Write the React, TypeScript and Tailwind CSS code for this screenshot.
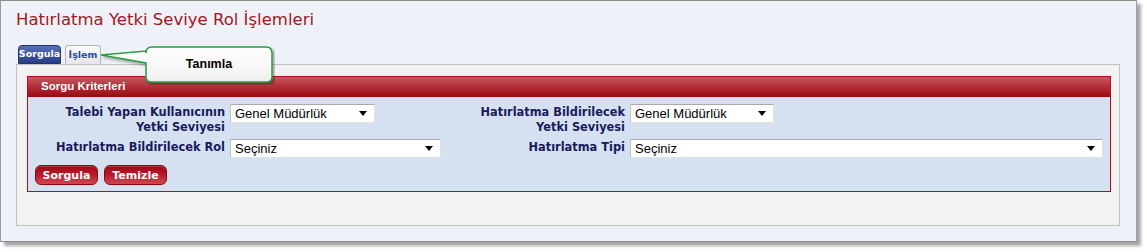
import React from "react";

function FakeSelect({ value, width }: { value: string; width: string }) {
  return (
    <div
      className={`${width} h-[19px] bg-white border border-t-[#a9a9a9] border-l-[#c4c4c4] border-r-[#e2e2e2] border-b-[#e2e2e2] flex items-center justify-between pl-[4px] pr-[7px]`}
    >
      <span className="text-[13px] text-black leading-none font-['Liberation_Sans',Arial,sans-serif]">
        {value}
      </span>
      <svg width="8" height="5" viewBox="0 0 8 5">
        <path d="M0 0 H8 L4 5 Z" fill="#000" />
      </svg>
    </div>
  );
}

function Label({ children }: { children: React.ReactNode }) {
  return (
    <div className="text-right text-[11.4px] font-bold leading-[14.5px] text-[#1a1a5c] pt-[1px] font-['DejaVu_Sans',Verdana,sans-serif]">
      {children}
    </div>
  );
}

function RedButton({ children }: { children: React.ReactNode }) {
  return (
    <button className="h-[20px] w-[63px] rounded-[6px] border border-[#8a0612] bg-gradient-to-b from-[#9c0816] via-[#b81a2a] to-[#d44452] text-white text-[11px] font-bold leading-none font-['DejaVu_Sans',Verdana,sans-serif] shadow-[inset_0_1px_0_rgba(255,255,255,0.2)]">
      {children}
    </button>
  );
}

export default function App() {
  return (
    <div className="w-[1147px] h-[252px] bg-white">
      <div className="relative w-[1137px] h-[242px] bg-[#eef2f8] border border-t-[#8c8c8c] border-l-[#9a9a9a] border-r-[#8fa3bf] border-b-[#8c8c8c] shadow-[4px_4px_3px_rgba(0,0,0,0.35)] pl-[15px] pr-[16px]">
        {/* Title */}
        <h1 className="pt-[7px] h-[44px] text-[16.5px] text-[#a01822] font-['DejaVu_Sans',Verdana,sans-serif]">
          Hatırlatma Yetki Seviye Rol İşlemleri
        </h1>

        {/* Tabs */}
        <div className="flex items-end gap-[4px] pl-[2px] h-[19px]">
          <div className="h-[19px] w-[43px] rounded-t-[4px] bg-gradient-to-b from-[#5570b8] to-[#2a3d86] border border-[#24346e] flex items-center justify-center text-white text-[9.5px] font-bold font-['DejaVu_Sans',Verdana,sans-serif]">
            Sorgula
          </div>
          <div className="h-[19px] w-[36px] rounded-t-[4px] bg-gradient-to-b from-[#fbfbfb] to-[#e6e6e6] border border-[#b4b4b4] border-b-0 flex items-center justify-center text-[#2a4a9c] text-[9.5px] font-bold font-['DejaVu_Sans',Verdana,sans-serif]">
            İşlem
          </div>
        </div>

        {/* Tab content */}
        <div className="h-[162px] bg-[#f2f2f2] border border-[#c0c0c0] pt-[11px] pl-[10px] pr-[8px]">
          <div className="border border-[#b0101e]">
            <div className="h-[20px] bg-gradient-to-b from-[#c85760] via-[#b22c37] to-[#9a0410] flex items-center pl-[13px] text-white text-[11.5px] font-bold font-['Liberation_Sans',Arial,sans-serif]">
              Sorgu Kriterleri
            </div>
            <div className="bg-[#d5e1f1] pt-[7px] pb-[6px] pl-[7px] pr-[8px]">
              <div className="grid grid-cols-[190px_230px_160px_1fr] gap-x-[5px] gap-y-[5px]">
                <Label>
                  Talebi Yapan Kullanıcının
                  <br />
                  Yetki Seviyesi
                </Label>
                <div>
                  <FakeSelect value="Genel Müdürlük" width="w-[145px]" />
                </div>
                <Label>
                  Hatırlatma Bildirilecek
                  <br />
                  Yetki Seviyesi
                </Label>
                <div>
                  <FakeSelect value="Genel Müdürlük" width="w-[144px]" />
                </div>
                <Label>Hatırlatma Bildirilecek Rol</Label>
                <div>
                  <FakeSelect value="Seçiniz" width="w-[211px]" />
                </div>
                <Label>Hatırlatma Tipi</Label>
                <div>
                  <FakeSelect value="Seçiniz" width="w-[473px]" />
                </div>
              </div>
              <div className="flex gap-[6px] mt-[7px]">
                <RedButton>Sorgula</RedButton>
                <RedButton>Temizle</RedButton>
              </div>
            </div>
          </div>
        </div>

        {/* Tooltip */}
        <div className="absolute left-[98px] top-[44px] w-[176px] h-[40px]">
          <svg width="176" height="40" viewBox="0 0 176 40" className="absolute left-0 top-0">
            <defs>
              <linearGradient id="tipg" x1="0" y1="0" x2="0" y2="1">
                <stop offset="0" stopColor="#ffffff" />
                <stop offset="1" stopColor="#eef0ee" />
              </linearGradient>
              <filter id="tips" x="-10%" y="-20%" width="130%" height="160%">
                <feDropShadow dx="2" dy="2" stdDeviation="1.5" floodColor="#000" floodOpacity="0.35" />
              </filter>
            </defs>
            <path
              d="M53 2 H167 Q173 2 173 8 V32 Q173 37 167 37 H53 Q47 37 47 32 V18 L2 10 L47 6 V8 Q47 2 53 2 Z"
              fill="url(#tipg)"
              stroke="#2e9a44"
              strokeWidth="1.5"
              filter="url(#tips)"
            />
          </svg>
          <div className="absolute left-[47px] top-[2px] w-[126px] h-[35px] flex items-center justify-center text-[12.5px] font-bold text-black font-['Liberation_Sans',Arial,sans-serif]">
            Tanımla
          </div>
        </div>
      </div>
    </div>
  );
}
